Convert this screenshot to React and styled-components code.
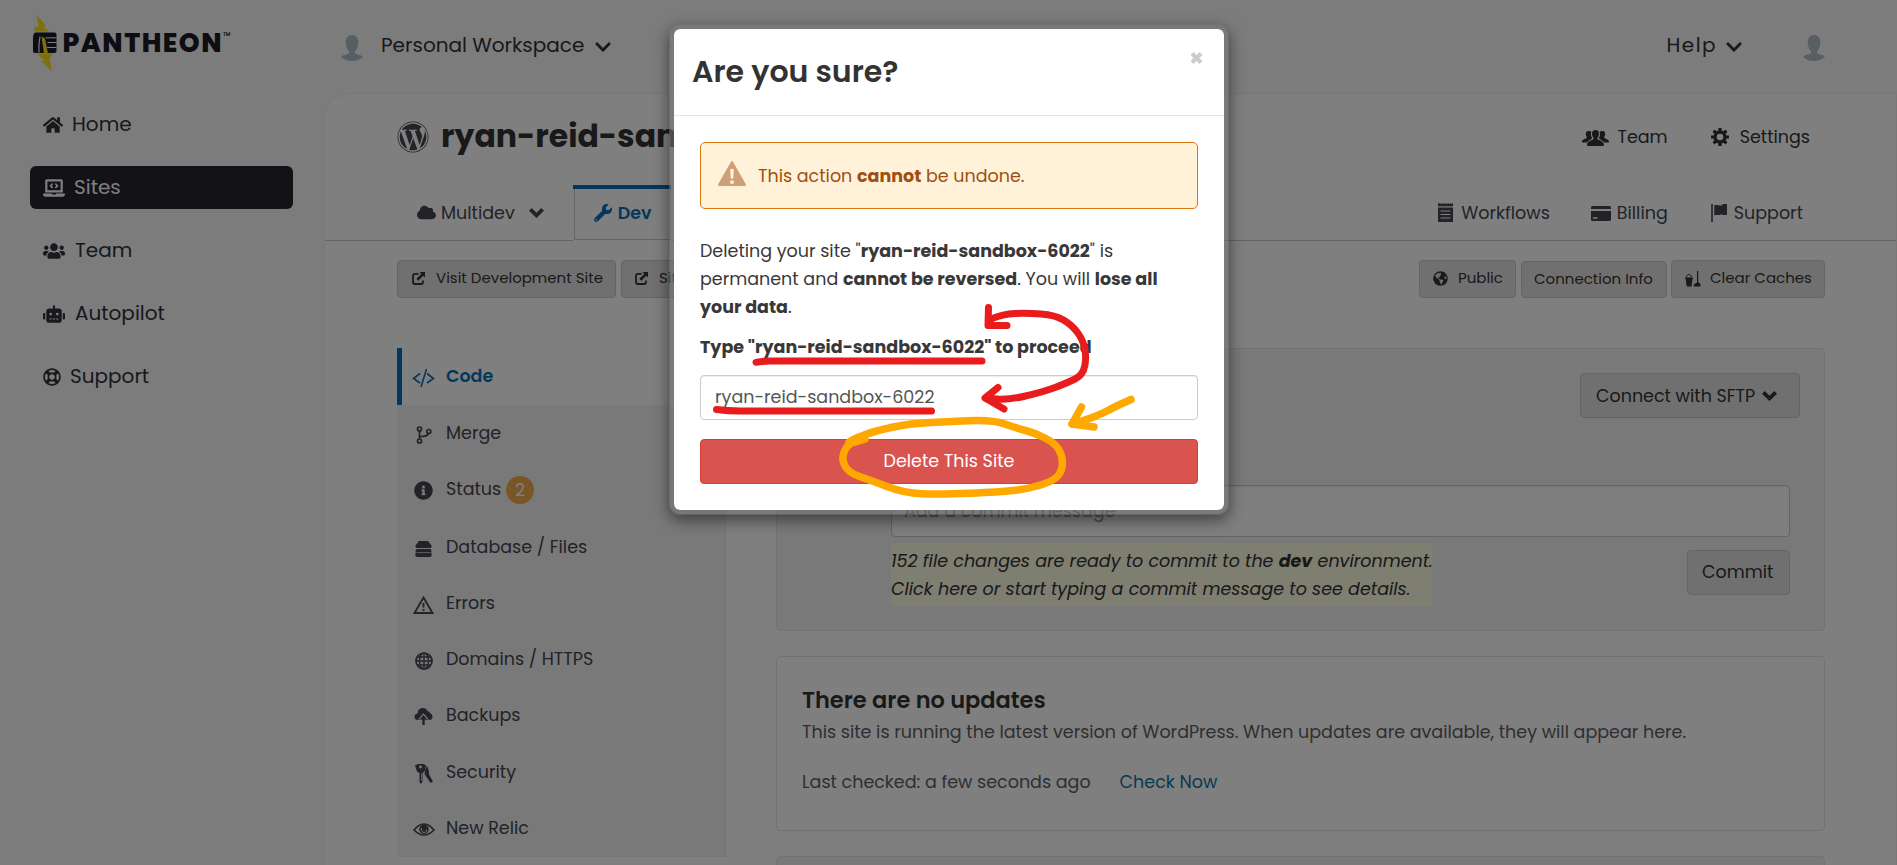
import React from 'react';
import styled, { createGlobalStyle } from 'styled-components';
import {
  FaHome,
  FaLaptopCode,
  FaUsers,
  FaRobot,
  FaRegLifeRing,
  FaWordpress,
  FaCloud,
  FaWrench,
  FaInfoCircle,
  FaChevronDown,
  FaGlobeAmericas,
} from 'react-icons/fa';

const GlobalStyle = createGlobalStyle`
  * { box-sizing: border-box; }
  body {
    margin: 0;
    background: #f9f9f9;
    font-family: Poppins, Inter, "Liberation Sans", sans-serif;
    font-size: 17.5px;
    line-height: 28px;
    overflow: hidden;
  }
`;

const ink = '#30303a';
const menuInk = '#45454f';
const blue = '#0b6fb9';
const line = '#cacaca';

const Page = styled.div`
  position: relative;
  display: flex;
  width: 1897px;
  height: 865px;
  overflow: hidden;
  background: #f9f9f9;
`;

const Label = styled.span`
  font-size: ${(p) => p.$size || 17.5}px;
  font-weight: ${(p) => p.$weight || 400};
  letter-spacing: ${(p) => p.$track || 0}px;
  white-space: pre;
`;

const Glyph = styled.span`
  display: inline-flex;
  flex: none;
  width: ${(p) => p.$w}px;
  height: ${(p) => p.$h}px;
  margin: ${(p) => p.$m || 0};
  color: ${(p) => p.$color || 'inherit'};
  svg {
    display: block;
    width: 100%;
    height: 100%;
  }
`;

/* Sidebar */
const Sidebar = styled.aside`
  flex: none;
  width: 324px;
  color: ${ink};
`;

const Brand = styled.div`
  display: flex;
  align-items: flex-start;
  height: 103px;
  padding: 14px 0 0 33px;
  color: #1b1a26;
`;

const Wordmark = styled.span`
  margin: 11px 0 0 5.5px;
  font-size: 26.5px;
  line-height: 36px;
  font-weight: 800;
  letter-spacing: 1.5px;
`;

const Trademark = styled.span`
  margin-top: 17px;
  font-size: 5px;
  line-height: 7px;
  font-weight: 600;
`;

const Nav = styled.nav`
  display: flex;
  flex-direction: column;
  gap: 20px;
  padding-left: 30px;
`;

const NavItem = styled.a`
  display: flex;
  align-items: center;
  gap: ${(p) => p.$gap || 10}px;
  width: 263px;
  height: 43px;
  padding: 0 13px 2px;
  border-radius: 6px;
  background: ${(p) => (p.$active ? '#25242e' : 'transparent')};
  color: ${(p) => (p.$active ? '#fff' : ink)};
`;

/* Main column */
const Main = styled.main`
  flex: 1;
  min-width: 0;
  display: flex;
  flex-direction: column;
`;

const TopBar = styled.header`
  display: flex;
  align-items: center;
  flex: none;
  height: 93px;
  padding: 0 72px 3px 17px;
  color: ${ink};
`;

const Spacer = styled.div`
  flex: 1;
`;

const Panel = styled.section`
  flex: 1;
  border: 1px solid #f1f1f1;
  border-bottom: 0;
  border-radius: 24px 0 0 0;
  box-shadow: inset 0 3px 5px rgba(0, 0, 0, 0.015);
  background: #fff;
`;

const TitleRow = styled.div`
  display: flex;
  align-items: center;
  height: 91px;
  padding: 0 86px 6px 72px;
  color: #333;
`;

const SiteTitle = styled.h1`
  margin: 0 0 1px 12px;
  font-size: 31.5px;
  line-height: 40px;
  font-weight: 700;
  white-space: nowrap;
`;

const TabRow = styled.div`
  display: flex;
  align-items: center;
  height: 56px;
  padding: 0 93px 0 92px;
  border-bottom: 1px solid ${line};
  color: ${menuInk};
`;

const ActiveTab = styled.div`
  align-self: stretch;
  display: flex;
  width: 98px;
  height: 56px;
  margin: 0 0 -1px 29px;
  padding-bottom: 1px;
  background: #fff;
  border-top: 4px solid ${blue};
`;

const ActiveTabFace = styled.div`
  flex: 1;
  display: flex;
  align-items: center;
  margin-left: 1px;
  padding: 0 0 3px 19px;
  border: 1px solid ${line};
  border-top: 0;
  color: ${blue};
`;

const ActionRow = styled.div`
  display: flex;
  align-items: flex-end;
  gap: 5px;
  padding: 19px 71px 0 72px;
`;

const Button = styled.button`
  display: flex;
  align-items: center;
  flex: none;
  width: ${(p) => p.$w}px;
  height: ${(p) => p.$h || 38}px;
  margin: 0;
  padding: 0 0 ${(p) => p.$drop ?? 4}px ${(p) => p.$pad || 13}px;
  border: 1px solid ${line};
  border-radius: 4px;
  background: #e1e1e1;
  color: #333;
  font-family: inherit;
`;

const InfoButton = styled(Button)`
  margin-right: -1px;
`;

const Columns = styled.div`
  display: flex;
  align-items: flex-start;
  gap: 50px;
  padding: 50px 71px 0 72px;
`;

/* Environment menu */
const Menu = styled.ul`
  flex: none;
  width: 329px;
  margin: 0;
  padding: 0;
  list-style: none;
  color: ${menuInk};
`;

const MenuItem = styled.li`
  display: flex;
  align-items: flex-start;
  height: ${(p) => p.$h || 56}px;
  padding-top: 13px;
  background: ${(p) => (p.$active ? '#fff' : '#f3f3f3')};
  border-left: 5px solid ${(p) => (p.$active ? blue : '#f3f3f3')};
  border-right: 1px solid ${(p) => (p.$active ? '#fff' : '#ebebeb')};
  color: ${(p) => (p.$active ? blue : 'inherit')};
  line-height: 30px;
  &:last-child {
    border-bottom: 1px solid #ebebeb;
  }
`;

const IconCell = styled.span`
  display: flex;
  align-items: center;
  justify-content: center;
  flex: none;
  width: 25px;
  height: 33px;
  margin: 0 10px 0 9px;
`;

const Badge = styled.span`
  display: flex;
  align-items: center;
  justify-content: center;
  width: 28px;
  height: 28px;
  margin: 2px 0 0 5px;
  border-radius: 50%;
  background: #f0ad4e;
  color: #fff;
  font-size: 17px;
`;

/* Cards */
const Cards = styled.div`
  flex: 1;
  display: flex;
  flex-direction: column;
  gap: 25px;
`;

const Card = styled.div`
  height: ${(p) => p.$h}px;
  border: 1px solid #e4e4e4;
  border-radius: 4px;
  background: ${(p) => (p.$tint ? '#f3f3f3' : '#fff')};
`;

const ConnectRow = styled.div`
  display: flex;
  justify-content: flex-end;
  padding: 24px 24px 0;
`;

const CommitForm = styled.div`
  margin: 67px 34px 0 114px;
`;

const CommitField = styled.div`
  height: 52px;
  padding: 11px 12px 0;
  border: 1px solid ${line};
  border-radius: 4px;
  background: #fff;
  box-shadow: inset 0 1px 2px rgba(0, 0, 0, 0.08);
  color: #999;
`;

const CommitFooter = styled.div`
  display: flex;
  justify-content: space-between;
  align-items: flex-start;
  padding-top: 6px;
`;

const Notice = styled.div`
  width: 541px;
  height: 63px;
  padding-top: 4px;
  background: #fcfce2;
  color: #333;
  font-style: italic;
  white-space: nowrap;
`;

const CommitButton = styled(Button)`
  margin-top: 7px;
`;

const UpdateCard = styled(Card)`
  padding: 28px 25px 0;
  color: #5c5e66;
`;

const CardTitle = styled.h2`
  margin: 0 0 3px;
  color: #333;
  font-size: 22.5px;
  line-height: 30px;
  font-weight: 600;
`;

const Text = styled.p`
  margin: 0 0 ${(p) => p.$gap || 0}px;
  white-space: nowrap;
`;

const TextLink = styled.a`
  margin-left: 29px;
  color: #1173a8;
`;

/* Dialog */
const Overlay = styled.div`
  position: absolute;
  inset: 0;
  display: flex;
  align-items: flex-start;
  padding: 24px 0 0 669px;
  background: rgba(0, 0, 0, 0.5);
`;

const Dialog = styled.div`
  width: 560px;
  height: 491px;
  border: 5px solid rgba(118, 118, 118, 0.55);
  border-radius: 11px;
  background: #fff;
  background-clip: padding-box;
  box-shadow: 0 5px 15px rgba(0, 0, 0, 0.5);
  color: #383838;
`;

const DialogHeader = styled.div`
  display: flex;
  justify-content: space-between;
  height: 87px;
  padding: 22px 21px 0 18px;
  border-bottom: 1px solid #e5e5e5;
`;

const DialogTitle = styled.h2`
  margin: 1px 0 0;
  font-size: 30px;
  line-height: 40px;
  font-weight: 600;
  color: #333;
`;

const DialogBody = styled.div`
  padding: 26px;
`;

const Alert = styled.div`
  display: flex;
  align-items: center;
  height: 67px;
  padding-left: 17px;
  border: 1px solid #d97711;
  border-radius: 5px;
  background: #fff2d9;
  color: #a04f12;
`;

const Copy = styled.div`
  margin-top: ${(p) => p.$top}px;
  white-space: nowrap;
`;

const ConfirmField = styled.div`
  display: flex;
  align-items: center;
  height: 45px;
  margin-top: 14px;
  padding: 0 0 1px 14px;
  border: 1px solid #ccc;
  border-radius: 4px;
  box-shadow: inset 0 1px 1px rgba(0, 0, 0, 0.075);
  color: #555;
`;

const DeleteButton = styled.button`
  display: flex;
  align-items: center;
  justify-content: center;
  width: 100%;
  height: 45px;
  margin-top: 19px;
  padding: 0 0 1px;
  border: 1px solid #d43f3a;
  border-radius: 4px;
  background: #d9534f;
  color: #fff;
  font-family: inherit;
`;

const Markup = styled.svg`
  position: absolute;
  left: 660px;
  top: 290px;
  fill: none;
  stroke-linecap: round;
  stroke-linejoin: round;
`;

/* Drawings */
const LogoMark = () => (
  <svg viewBox="0 0 24 58">
    <path d="M3.200 0 13 12 10.500 12.800 16.500 17.500H2L1 13.500 5.500 12.500Z" fill="#ffe01e" />
    <path d="M3 18.500H21.500Q23.500 18.500 23.500 20.500V37Q23.500 39 21.500 39H2Q0 39 0 37V24Q0 18.500 3 18.500Z" fill="#1b1a26" />
    <path d="M12.500 23.800H23.500M14.500 28.500H23.500M14 33.500H23.500" stroke="#f9f9f9" strokeWidth="1" />
    <path d="M7 22.500Q5.500 30 6 38.500" fill="none" stroke="#f9f9f9" strokeWidth="1.200" />
    <path d="M8.500 22.500 12 24.500 15 39.500H20L16.700 45 19 57.500 8.500 47.500 11.500 46.500 4 39.800H11Z" fill="#ffe01e" />
  </svg>
);

const Avatar = () => (
  <svg viewBox="0 0 22 26" fill="#b0bfc6">
    <path d="M11 0c4 0 6.300 3 6.300 7.500 0 3.500-1.300 7-3.300 8.800v2c2 1.500 6 1.200 8 3.700C19.500 24.700 15 26 11 26S2.500 24.700 0 22c2-2.500 6-2.200 8-3.700v-2C6 14.500 4.700 11 4.700 7.500 4.700 3 7 0 11 0Z" />
  </svg>
);

const BoldChevron = () => (
  <svg viewBox="0 0 15 10">
    <path d="M0 2.700 2.700 0 7.500 4.700 12.300 0 15 2.700 7.500 10Z" fill="currentColor" />
  </svg>
);

const GroupIcon = () => (
  <svg viewBox="0 0 27 16" fill="currentColor">
    <path d="M13.500 0c2.400 0 3.600 1.400 3.500 3.500 0 2-.7 3.300-1.500 4.200v1.600c1.500 1 6.500 2 6.500 5.200 0 1-.5 1.500-1.500 1.500h-14C5.500 16 5 15.500 5 14.500c0-3.200 5-4.200 6.500-5.200V7.700C10.700 6.800 10 5.500 10 3.500 10 1.400 11.100 0 13.500 0Z" />
    <path d="M9.300 1.700C8.500 4.500 9.200 6.700 10.300 8.300L4.500 12.500H.8c-.6 0-.8-.4-.8-1C0 9.500 3.200 9 4.700 8V6.900C2.800 3.700 4 .9 6.800 1 8 1 8.800 1.200 9.300 1.700Z" />
    <path d="M17.700 1.700c.8 2.800.1 5-1 6.600l5.800 4.200h3.700c.6 0 .8-.4.8-1 0-2-3.200-2.500-4.700-3.500V6.900C24.200 3.700 23 .9 20.200 1 19 1 18.200 1.200 17.700 1.700Z" />
  </svg>
);

const GearIcon = () => (
  <svg viewBox="0 0 18 18" fill="none" stroke="currentColor">
    <circle cx="9" cy="9" r="5" strokeWidth="3.400" />
    <path
      d="M9 0V3M9 15V18M0 9H3M15 9H18M2.600 2.600 4.800 4.800M13.200 13.200 15.400 15.400M2.600 15.400 4.800 13.200M13.200 4.800 15.400 2.600"
      strokeWidth="3.200"
    />
  </svg>
);

const LogIcon = () => (
  <svg viewBox="0 0 15 19">
    <path d="M0 4.500H15V19H0Z" fill="currentColor" />
    <path d="M0 1.800H15" stroke="currentColor" strokeWidth="3" />
    <path d="M2 .3H14" stroke="#fff" strokeWidth="1" strokeDasharray="1 1.200" />
    <path d="M2.500 8H12.500M2.500 11.500H12.500M2.500 15H12.500" stroke="#fff" strokeWidth="1.100" />
  </svg>
);

const CardIcon = () => (
  <svg viewBox="0 0 20 15">
    <path d="M1.500 0h17Q20 0 20 1.500V3H0V1.500Q0 0 1.500 0ZM0 5H20v8.500Q20 15 18.500 15h-17Q0 15 0 13.500Z" fill="currentColor" />
    <path d="M2 12H6.500" stroke="#fff" strokeWidth="1.500" />
  </svg>
);

const FlagIcon = () => (
  <svg viewBox="0 0 16 18">
    <path d="M1 0V18" stroke="currentColor" strokeWidth="1.600" />
    <path d="M3.300 1.300C6 .2 8 2 11 1.300L12 0H16V11H12L10 10.200C7.500 12 5.500 10 3.300 11.500Z" fill="currentColor" />
  </svg>
);

const ExternalIcon = () => (
  <svg viewBox="0 0 13 13">
    <path d="M6.500 1.800H3Q1 1.800 1 3.800V10Q1 12 3 12H9Q11 12 11 10V8.500" fill="none" stroke="currentColor" strokeWidth="1.800" />
    <path d="M7.500 0H13V5.500L11.200 3.800 6.300 8.700 4.400 6.800 9.300 1.900Z" fill="currentColor" />
  </svg>
);

const BucketIcon = () => (
  <svg viewBox="0 0 16 16" fill="currentColor">
    <path d="M0 6.500H8V8H7.500L6.500 15.500H1.700L.7 8H0Z" />
    <path d="M1.500 6.300C2 2.500 6 2.500 6.500 6.300" fill="none" stroke="currentColor" />
    <path d="M12 0H13.200V11L15.500 13V15.500H8.700V13.500L12 11.500Z" />
  </svg>
);

const CodeIcon = () => (
  <svg viewBox="0 0 23 18" fill="none" stroke="currentColor" strokeWidth="1.600">
    <path d="M8 4.500 1.500 9.500 8 14M15 4.500 21.500 9.500 15 14M14.500 0 9 18" />
  </svg>
);

const BranchIcon = () => (
  <svg viewBox="0 0 16 18" fill="none" stroke="currentColor" strokeWidth="1.700">
    <circle cx="3.500" cy="3" r="2" />
    <circle cx="3.500" cy="15" r="2" />
    <circle cx="12.800" cy="5.500" r="2" />
    <path d="M3.500 5V13M3.500 11.500Q4 10.300 6 10.300 11 10.500 12.500 7.500" />
  </svg>
);

const DrawerIcon = () => (
  <svg viewBox="0 0 17 16" fill="currentColor">
    <path d="M4 0H13L16.500 4.500V5.500Q16.500 7 15 7H2Q.5 7 .5 5.500V4.500Z" />
    <path d="M1.500 8H15.500Q17 9.500 16.300 11.200L16.700 14Q16.500 16 15 16H2Q.5 16 .3 14L.7 11.200Q0 9.500 1.500 8Z" />
    <path d="M1.500 11.600H15.500" stroke="#f3f3f3" strokeWidth=".7" />
  </svg>
);

const WarningOutline = () => (
  <svg viewBox="0 0 21 18" fill="none" stroke="currentColor">
    <path d="M10.500 1.500 19.500 17H1.500Z" strokeWidth="1.800" />
    <path d="M10.500 7V11.500M10.500 13V15" strokeWidth="1.900" />
  </svg>
);

const GridGlobe = () => (
  <svg viewBox="0 0 18 18" fill="none" stroke="currentColor" strokeWidth="1.400">
    <circle cx="9" cy="9" r="8" strokeWidth="1.700" />
    <ellipse cx="9" cy="9" rx="4.500" ry="8" />
    <path d="M9 1V17M1 9H17M2.500 5H15.500M2.500 13H15.500" />
  </svg>
);

const CloudUpIcon = () => (
  <svg viewBox="0 0 18 17">
    <path d="M3.500 12Q0 12 0 8.700 0 6 3 5.500 3.500 0 8.500 0 12 0 13 3.200 15 2.800 15.500 5 18 5.700 18 8.500 18 12 14.500 12Z" fill="currentColor" />
    <path d="M9 5.200 14.500 11.500H11V17H7V11.500H3.500Z" fill="#f3f3f3" />
    <path d="M9 7 12.800 11.500H10.200V17H7.800V11.500H5.200Z" fill="currentColor" />
  </svg>
);

const KeysIcon = () => (
  <svg viewBox="0 0 18 20" fill="currentColor">
    <path d="M0 1.500 3 0H8.500L11 1.500 9.500 7.500 7.500 9V17.500L6 20 4.500 18V9L2 7.500Z" />
    <path d="M12 1.500 14 7.500V10.500L18 17.500 15.500 19 9.500 10 10.500 5Z" />
    <circle cx="5.500" cy="3" r="1.400" fill="#f3f3f3" />
    <path d="M6.500 9.500V17" stroke="#f3f3f3" strokeWidth=".7" />
  </svg>
);

const EyeIcon = () => (
  <svg viewBox="0 0 22 13">
    <path d="M1 7Q11-5 21 7 11 17 1 7Z" fill="none" stroke="currentColor" strokeWidth="1.700" />
    <circle cx="11" cy="6.300" r="4.700" fill="currentColor" />
    <path d="M8.500 5Q8 9.500 11.500 9.500 14 9 13.700 6.500" fill="none" stroke="#f3f3f3" strokeWidth=".9" />
  </svg>
);

const WarningSolid = () => (
  <svg viewBox="0 0 28 25">
    <path d="M14 0Q14.600 0 15 .8L27.700 23Q28.500 25 26.500 25H1.500Q-.5 25 .3 23L13 .8Q13.400 0 14 0Z" fill="#cf9f77" />
    <path d="M12.200 8H15.800L15.300 17.500H12.700ZM12.300 19.500H15.700V22.700H12.300Z" fill="#fff2d9" />
  </svg>
);

const CloseIcon = () => (
  <svg viewBox="0 0 13 12">
    <path d="M2 1.500 11 10.500M11 1.500 2 10.500" stroke="#ccc" strokeWidth="4" />
  </svg>
);

/* Smooth pen stroke running through a list of points. */
const stroke = (pts) => {
  let d = `M${pts[0][0]} ${pts[0][1]}`;
  for (let i = 1; i < pts.length - 1; i += 1) {
    const mx = (pts[i][0] + pts[i + 1][0]) / 2;
    const my = (pts[i][1] + pts[i + 1][1]) / 2;
    d += `Q${pts[i][0]} ${pts[i][1]} ${mx} ${my}`;
  }
  const last = pts[pts.length - 1];
  return `${d}L${last[0]} ${last[1]}`;
};

const redArc = [[991, 319], [1003, 314], [1027, 313], [1055, 315], [1072, 325], [1083, 340], [1086.5, 357], [1083, 375], [1067, 383], [1043, 392], [1008, 400], [986, 398]];
const orangeRing = [[865, 439], [853, 443], [847, 443], [856, 438], [875, 431], [909, 423.5], [943, 422], [992, 419.5], [1016, 428], [1035, 433], [1055, 443], [1063, 457], [1061.5, 473], [1051, 482], [1027, 489], [1000, 492], [939, 494.5], [904, 493], [870, 480], [849, 473], [841, 459], [848, 443], [865, 439]];

const navItems = [
  ['Home', FaHome, 20, 18, 9],
  ['Sites', FaLaptopCode, 22, 18, 9],
  ['Team', FaUsers, 22, 18, 10],
  ['Autopilot', FaRobot, 22, 18, 10],
  ['Support', FaRegLifeRing, 18, 18, 9],
];

const menuItems = [
  ['Code', CodeIcon, 23, 18, 57],
  ['Merge', BranchIcon, 16, 18, 56],
  ['Status', FaInfoCircle, 19, 19, 58],
  ['Database / Files', DrawerIcon, 17, 16, 56],
  ['Errors', WarningOutline, 21, 18, 56],
  ['Domains / HTTPS', GridGlobe, 18, 18, 56],
  ['Backups', CloudUpIcon, 19, 17, 57],
  ['Security', KeysIcon, 18, 20, 56],
  ['New Relic', EyeIcon, 22, 13, 57],
];

export default function App() {
  return (
    <Page>
      <GlobalStyle />
      <Sidebar>
        <Brand>
          <Glyph $w={24} $h={58}><LogoMark /></Glyph>
          <Wordmark>PANTHEON</Wordmark>
          <Trademark>TM</Trademark>
        </Brand>
        <Nav>
          {navItems.map(([name, Icon, w, h, gap]) => (
            <NavItem key={name} $active={name === 'Sites'} $gap={gap}>
              <Glyph $w={w} $h={h} $m="3px 0 0"><Icon /></Glyph>
              <Label $size={20}>{name}</Label>
            </NavItem>
          ))}
        </Nav>
      </Sidebar>

      <Main>
        <TopBar>
          <Glyph $w={22} $h={26} $m="5px 18px 0 0"><Avatar /></Glyph>
          <Label $size={20}>Personal Workspace</Label>
          <Glyph $w={16} $h={18} $m="4px 0 0 11px"><FaChevronDown /></Glyph>
          <Spacer />
          <Label $size={20} $track={1.45}>Help</Label>
          <Glyph $w={16} $h={18} $m="3px 61px 0 9px"><FaChevronDown /></Glyph>
          <Glyph $w={22} $h={26} $m="6px 0 0"><Avatar /></Glyph>
        </TopBar>

        <Panel>
          <TitleRow>
            <Glyph $w={32} $h={32} $color={menuInk}><FaWordpress /></Glyph>
            <SiteTitle>ryan-reid-sandbox-6022</SiteTitle>
            <Spacer />
            <Glyph $w={27} $h={16} $m="3px 8px 0 0"><GroupIcon /></Glyph>
            <Label>Team</Label>
            <Glyph $w={18} $h={18} $m="1px 11px 0 43px"><GearIcon /></Glyph>
            <Label>Settings</Label>
          </TitleRow>

          <TabRow>
            <Glyph $w={19} $h={17} $m="0 5px 0 0"><FaCloud /></Glyph>
            <Label>Multidev</Label>
            <Glyph $w={15} $h={10} $m="1px 0 0 14px"><BoldChevron /></Glyph>
            <ActiveTab>
              <ActiveTabFace>
                <Glyph $w={18} $h={18} $m="0 6px 0 0"><FaWrench /></Glyph>
                <Label $weight={600}>Dev</Label>
              </ActiveTabFace>
            </ActiveTab>
            <Spacer />
            <Glyph $w={15} $h={19} $m="0 8px 0 0"><LogIcon /></Glyph>
            <Label>Workflows</Label>
            <Glyph $w={20} $h={15} $m="2px 6px 0 41px"><CardIcon /></Glyph>
            <Label>Billing</Label>
            <Glyph $w={16} $h={18} $m="0 7px 0 43px"><FlagIcon /></Glyph>
            <Label>Support</Label>
          </TabRow>

          <ActionRow>
            <Button $w={219} $pad={14}>
              <Glyph $w={13} $h={13} $m="3px 11px 0 0"><ExternalIcon /></Glyph>
              <Label $size={15}>Visit Development Site</Label>
            </Button>
            <Button $w={148} $pad={13}>
              <Glyph $w={13} $h={13} $m="3px 11px 0 0"><ExternalIcon /></Glyph>
              <Label $size={15}>Site</Label>
            </Button>
            <Spacer />
            <Button $w={97} $pad={13}>
              <Glyph $w={15} $h={15} $m="3px 10px 0 0"><FaGlobeAmericas /></Glyph>
              <Label $size={15}>Public</Label>
            </Button>
            <InfoButton $w={146} $h={37} $pad={12} $drop={2}>
              <Label $size={15}>Connection Info</Label>
            </InfoButton>
            <Button $w={154} $pad={13}>
              <Glyph $w={16} $h={16} $m="3px 9px 0 0"><BucketIcon /></Glyph>
              <Label $size={15}>Clear Caches</Label>
            </Button>
          </ActionRow>

          <Columns>
            <Menu>
              {menuItems.map(([name, Icon, w, h, rowH]) => (
                <MenuItem key={name} $active={name === 'Code'} $h={rowH}>
                  <IconCell><Glyph $w={w} $h={h}><Icon /></Glyph></IconCell>
                  <Label $weight={name === 'Code' ? 600 : 400}>{name}</Label>
                  {name === 'Status' && <Badge>2</Badge>}
                </MenuItem>
              ))}
            </Menu>

            <Cards>
              <Card $h={283} $tint>
                <ConnectRow>
                  <Button $w={220} $h={45} $pad={15} $drop={0}>
                    <Label>Connect with SFTP</Label>
                    <Glyph $w={15} $h={10} $m="0 0 0 7px"><BoldChevron /></Glyph>
                  </Button>
                </ConnectRow>
                <CommitForm>
                  <CommitField><Label>Add a commit message</Label></CommitField>
                  <CommitFooter>
                    <Notice>
                      152 file changes are ready to commit to the <b>dev</b> environment.
                      <br />
                      Click here or start typing a commit message to see details.
                    </Notice>
                    <CommitButton $w={103} $h={45} $pad={14} $drop={1}>
                      <Label>Commit</Label>
                    </CommitButton>
                  </CommitFooter>
                </CommitForm>
              </Card>

              <UpdateCard $h={175}>
                <CardTitle>There are no updates</CardTitle>
                <Text $gap={22}>
                  This site is running the latest version of WordPress. When updates are available, they will appear here.
                </Text>
                <Text>
                  Last checked: a few seconds ago
                  <TextLink>Check Now</TextLink>
                </Text>
              </UpdateCard>

              <Card $h={120} $tint />
            </Cards>
          </Columns>
        </Panel>
      </Main>

      <Overlay>
        <Dialog role="dialog">
          <DialogHeader>
            <DialogTitle>Are you sure?</DialogTitle>
            <Glyph $w={13} $h={12} $m="1px 0 0"><CloseIcon /></Glyph>
          </DialogHeader>
          <DialogBody>
            <Alert>
              <Glyph $w={28} $h={25} $m="0 12px 4px 0"><WarningSolid /></Glyph>
              <span>This action <b>cannot</b> be undone.</span>
            </Alert>
            <Copy $top={28}>
              Deleting your site "<b>ryan-reid-sandbox-6022</b>" is
              <br />
              permanent and <b>cannot be reversed</b>. You will <b>lose all</b>
              <br />
              <b>your data</b>.
            </Copy>
            <Copy $top={12}>
              <b>Type "ryan-reid-sandbox-6022" to proceed</b>
            </Copy>
            <ConfirmField>ryan-reid-sandbox-6022</ConfirmField>
            <DeleteButton><Label>Delete This Site</Label></DeleteButton>
          </DialogBody>
        </Dialog>
      </Overlay>

      <Markup width="600" height="240" viewBox="660 290 600 240">
        <g stroke="#e81c1c" strokeWidth="7">
          <path d="M756 362.300Q762 361 770 361H982" />
          <path d="M716.500 409.500Q728 411 740 411H931.500" />
          <path d="M988.500 307.500 988 325.500H1007" />
          <path d={stroke(redArc)} />
          <path d="M998 387.500 985 398 1004 409" />
        </g>
        <g stroke="#ffa800" strokeWidth="7.500">
          <path d={stroke(orangeRing)} />
          <path d="M1131 399.500Q1114 407 1107 411 1096 417 1072 424" />
          <path d="M1081.500 407 1072 424 1094 427" />
        </g>
      </Markup>
    </Page>
  );
}
